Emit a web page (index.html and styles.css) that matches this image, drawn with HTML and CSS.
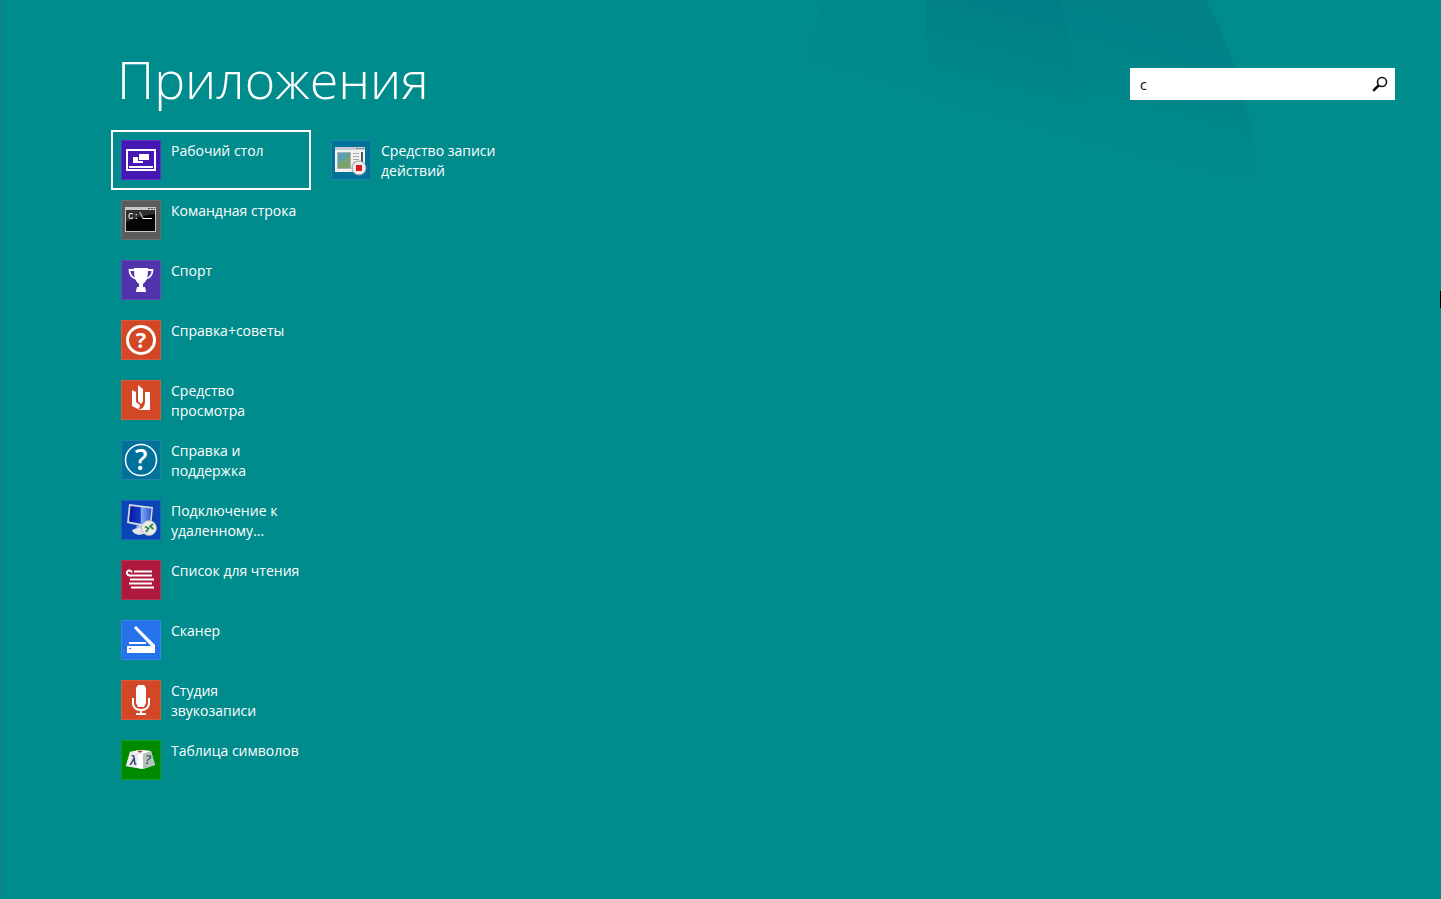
FILE: index.html
```html
<!DOCTYPE html>
<html lang="ru">
<head>
<meta charset="utf-8">
<meta name="viewport" content="width=device-width, initial-scale=1">
<title>Приложения</title>
<link rel="stylesheet" href="styles.css">
</head>
<body>
<div class="screen">
  <svg class="backdrop" viewBox="0 0 480 180" aria-hidden="true">
    <defs>
      <linearGradient id="fade" gradientUnits="userSpaceOnUse" x1="260" y1="0" x2="225" y2="130">
        <stop offset="0" stop-color="#006f7c" stop-opacity=".32"/>
        <stop offset="1" stop-color="#006f7c" stop-opacity="0"/>
      </linearGradient>
      <linearGradient id="fade-soft" gradientUnits="userSpaceOnUse" x1="260" y1="0" x2="225" y2="130">
        <stop offset="0" stop-color="#006f7c" stop-opacity=".18"/>
        <stop offset="1" stop-color="#006f7c" stop-opacity="0"/>
      </linearGradient>
    </defs>
    <path fill="url(#fade-soft)" d="M23 0Q5 50 0 90L125 130V0Z"/>
    <path fill="url(#fade)" d="M125 0H405Q452 90 456 180L125 130Z"/>
    <path fill="url(#fade-soft)" d="M125 0H258Q272 45 285 110L125 90Z"/>
  </svg>
  <header class="header">
    <h1 class="title">Приложения</h1>
    <form class="search" role="search">
      <input class="search-input" type="text" value="с" aria-label="Поиск приложений">
      <button class="search-button" type="button" aria-label="Найти">
        <svg width="16" height="16" viewBox="0 0 16 16" fill="none" stroke="#111"><circle cx="10" cy="6" r="4.500" stroke-width="1.600"/><path stroke-width="2.600" d="M6.500 9.500 1.200 14.800"/></svg>
      </button>
    </form>
  </header>
  <main class="main">
    <ul class="apps">
      <li><button class="app app-selected" type="button">
        <svg class="icon indigo" viewBox="0 0 40 40" aria-hidden="true"><rect x="6" y="10" width="28" height="20" fill="none" stroke="#fff" stroke-width="2"/><path fill="#fff" d="M8 26h24v2H8zM18 14h10v6H18zM12 17h5v4h5v2H12z"/></svg>
        <span class="label">Рабочий стол</span></button></li>
      <li><button class="app" type="button">
        <svg class="icon gray" viewBox="0 0 40 40" aria-hidden="true"><path fill="#c8c8c8" d="M4 7h31v25H4z"/><path fill="#050505" d="M5 10h29v21H5z"/><path fill="#303030" d="M5 10h29v4Q17 16 5 22z"/><path stroke="#444" stroke-dasharray="2 1" d="M27 8.500h7"/><text class="prompt" x="7" y="19">C:\</text><path stroke="#fff" d="M22 18.500h9"/></svg>
        <span class="label">Командная строка</span></button></li>
      <li><button class="app" type="button">
        <svg class="icon purple" viewBox="0 0 40 40" aria-hidden="true"><path fill="#fff" d="M13 8h14c0 9-1 13-5 16v3h2l1 4v1H15v-1l1-4h2v-3c-4-3-5-7-5-16z"/><path fill="none" stroke="#fff" stroke-width="1.800" d="M13 10H8.500q0 7 7 9M27 10h4.500q0 7-7 9"/></svg>
        <span class="label">Спорт</span></button></li>
      <li><button class="app" type="button">
        <svg class="icon orange" viewBox="0 0 40 40" aria-hidden="true"><circle cx="20" cy="20" r="13.500" fill="none" stroke="#fff" stroke-width="3"/><text class="mark mark-bold" x="20" y="28">?</text></svg>
        <span class="label">Справка+советы</span></button></li>
      <li><button class="app" type="button">
        <svg class="icon orange" viewBox="0 0 40 40" aria-hidden="true"><path fill="#fff" d="M11 10l4 2v10l4 3q0 3-2 4l-6-3zM17 5l5 4v12q-1 2-2 3l-3-3zM24 12h5v18H16q8-1 8-8z"/></svg>
        <span class="label">Средство просмотра</span></button></li>
      <li><button class="app" type="button">
        <svg class="icon teal" viewBox="0 0 40 40" aria-hidden="true"><circle cx="20" cy="20" r="15.500" fill="none" stroke="#fff" stroke-width="1.500"/><text class="mark" x="20" y="30">?</text></svg>
        <span class="label">Справка и поддержка</span></button></li>
      <li><button class="app" type="button">
        <svg class="icon blue" viewBox="0 0 40 40" aria-hidden="true"><defs><linearGradient id="screen"><stop offset="0" stop-color="#0717a0"/><stop offset=".5" stop-color="#173cc5"/><stop offset=".55" stop-color="#7fa9f4"/><stop offset="1" stop-color="#2a55cc"/></linearGradient></defs><path fill="#b9c0cb" d="M15 26l9-2 1 6h-8z"/><path fill="#d6dae2" d="M8 4l24 3-2 21-24-5z"/><path fill="url(#screen)" d="M9.500 6l21 2.500-2 17L8 21.500z"/><path fill="#e1e4e9" d="M11 30q5-3 13-2l3 5-9 2q-6-1-7-5z"/><circle cx="28" cy="28" r="7.500" fill="#e8ebe9" stroke="#a9b2b5" stroke-width=".7"/><path fill="none" stroke="#348b38" stroke-width="1.800" d="M24 26.500l3.500 2L25 32M32 24l-3 2.500 3.500 2.500"/></svg>
        <span class="label">Подключение к удаленному...</span></button></li>
      <li><button class="app" type="button">
        <svg class="icon crimson" viewBox="0 0 40 40" aria-hidden="true"><path fill="none" stroke="#fff" stroke-width="2" d="M11 12.500Q10 10 7.500 10.500 5 12 6.500 14.500 8 16 11 15.500H31M13 11.500H31M9 19.500h24M8 23.500h23M10 27.500h23"/></svg>
        <span class="label">Список для чтения</span></button></li>
      <li><button class="app" type="button">
        <svg class="icon azure" viewBox="0 0 40 40" aria-hidden="true"><path fill="#fff" d="M6 26h24L13 8l2-2 19 19v8H6zM8 22h17v2H8z"/><path fill="#2572eb" d="M8 28h2v1H8z"/></svg>
        <span class="label">Сканер</span></button></li>
      <li><button class="app" type="button">
        <svg class="icon orange" viewBox="0 0 40 40" aria-hidden="true"><path fill="#fff" d="M17 5h6l2 3v15l-2 4h-6l-2-4V8z"/><path fill="none" stroke="#fff" stroke-width="2" d="M12 18v6q1 6 8 6t8-6v-6M20 30v4M15 34h10"/></svg>
        <span class="label">Студия звукозаписи</span></button></li>
      <li><button class="app" type="button">
        <svg class="icon green" viewBox="0 0 40 40" aria-hidden="true"><path fill="#d2d4d8" d="M9 12l9-2 12 1 4 14-12 4L5 26z"/><path fill="#fff" d="M9 12l10-2 11 1-8 3z"/><path fill="#ececf0" d="M9 12l8 2-1 14-11-2z"/><path fill="#fff" d="M17 14h5v15l-6-1z"/><path fill="#b9c0c2" d="M22 14l8-3 4 14-12 4z"/><ellipse cx="19" cy="11.500" rx="2.500" ry="1" fill="#a84935"/><text class="key" x="9" y="25">λ</text><text class="key key-green" x="24" y="24">?</text></svg>
        <span class="label">Таблица символов</span></button></li>
      <li><button class="app" type="button">
        <svg class="icon teal" viewBox="0 0 40 40" aria-hidden="true"><path fill="#f1f1ee" d="M4 7h30v25H4z"/><path fill="#c5cbd0" d="M4 7h30v3H4z"/><path stroke="#777" stroke-dasharray="2 1" d="M25 8.500h8"/><path fill="#5f9fae" stroke="#a8b1aa" d="M6.500 12.500h13v16h-13z"/><path fill="#78a36b" d="M7 24q7-5 12-9v13H7z"/><path stroke="#aaa" d="M22 13.500h6M22 16.500h6M22 19.500h6M22 22.500h6"/><path fill="#405b60" d="M30 12h2v10h-2z"/><circle cx="28" cy="28" r="7" fill="#eee" stroke="#999"/><path fill="#d91e1e" d="M25 25h6v6h-6z"/></svg>
        <span class="label">Средство записи действий</span></button></li>
    </ul>
  </main>
  <div class="edge-mark"></div>
</div>
</body>
</html>
```
FILE: styles.css
```css
* { box-sizing: border-box; }

body {
  margin: 0;
  background: #008b8d;
  color: #fff;
  font-family: "Open Sans", "Noto Sans", sans-serif;
  font-size: 14px;
  line-height: 20px;
}

.screen {
  position: relative;
  display: flex;
  flex-direction: column;
  height: 100vh;
  overflow: hidden;
  border-left: 1px solid #2d7478;
}

.backdrop {
  position: absolute;
  top: 0;
  right: 160px;
  width: 480px;
  height: 180px;
}

.header {
  position: relative;
  display: flex;
  justify-content: space-between;
  align-items: flex-start;
  padding: 38px 46px 10px 116px;
}

.title {
  margin: 0;
  font-size: 52px;
  font-weight: 300;
  line-height: 82px;
}

.search {
  display: flex;
  width: 265px;
  height: 32px;
  margin-top: 30px;
  background: #fff;
}

.search-input {
  flex: 1;
  min-width: 0;
  padding: 2px 10px 0;
  border: 0;
  outline: 0;
  background: none;
  color: #000;
  font: inherit;
}

.search-button {
  display: grid;
  place-items: center;
  width: 30px;
  padding: 0;
  border: 0;
  background: none;
}

.main {
  position: relative;
  flex: 1;
  min-height: 0;
  padding: 0 46px 60px 110px;
}

.apps {
  display: grid;
  grid-auto-flow: column;
  grid-template-rows: repeat(auto-fill, 60px);
  grid-auto-columns: 200px;
  column-gap: 10px;
  height: 100%;
  margin: 0;
  padding: 0;
  list-style: none;
}

.app {
  display: flex;
  align-items: flex-start;
  gap: 10px;
  width: 100%;
  height: 60px;
  padding: 8px;
  border: 2px solid transparent;
  background: none;
  color: inherit;
  font: inherit;
  text-align: left;
}

.app-selected { border-color: #fff; }

.label { padding-top: 1px; }

.icon {
  flex: none;
  width: 40px;
  height: 40px;
  box-shadow: inset 0 0 0 1px rgba(255, 255, 255, .12);
}

.indigo { background: #4617b4; }
.gray { background: #5b5b5b; }
.purple { background: #5133ab; }
.orange { background: #d24726; }
.teal { background: #007299; }
.blue { background: #0a45b5; }
.crimson { background: #ae193e; }
.azure { background: #2572eb; }
.green { background: #008a00; }

.mark {
  fill: #fff;
  font-size: 28px;
  font-weight: 600;
  text-anchor: middle;
}

.mark-bold {
  font-size: 22px;
  font-weight: 700;
}

.prompt {
  fill: #fff;
  font-family: "Liberation Mono", monospace;
  font-size: 9px;
}

.key {
  fill: #26366e;
  font-size: 13px;
  font-style: italic;
  font-weight: 600;
}

.key-green { fill: #2c6747; }

.edge-mark {
  position: absolute;
  top: 291px;
  right: 0;
  width: 1px;
  height: 17px;
  background: #000;
}
```
